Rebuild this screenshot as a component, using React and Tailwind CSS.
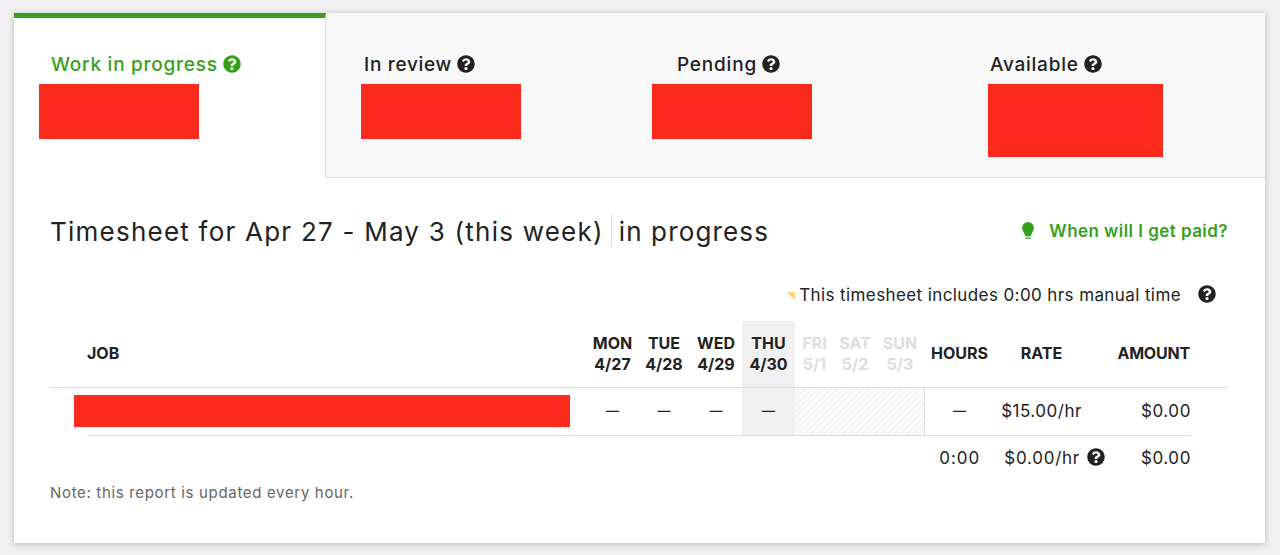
import React from 'react';
import clsx from 'clsx';
import { FaQuestionCircle } from 'react-icons/fa';

const TABS = [
  { label: 'Work in progress', active: true, track: 'tracking-[0.74px]', block: '-ml-3 w-40 h-[55px]' },
  { label: 'In review', track: 'tracking-[0.7px]', block: '-ml-[3px] w-40 h-[55px]' },
  { label: 'Pending', track: 'tracking-[0.8px]', block: '-ml-[25px] w-40 h-[55px]' },
  { label: 'Available', track: 'tracking-[0.75px]', block: '-ml-[2px] w-[175px] h-[73px]' },
];

const DAYS = [
  { name: 'MON', date: '4/27' },
  { name: 'TUE', date: '4/28' },
  { name: 'WED', date: '4/29' },
  { name: 'THU', date: '4/30', today: true },
  { name: 'FRI', date: '5/1', future: true },
  { name: 'SAT', date: '5/2', future: true },
  { name: 'SUN', date: '5/3', future: true },
];

// job | mon..sun | hours | rate | amount
const COLS = 'grid grid-cols-[500px_51px_52px_52px_53px_39px_42px_48px_1px_69px_95px_101px]';

const Help = ({ className }) => (
  <FaQuestionCircle className={clsx('size-[18px] shrink-0', className)} />
);

const Bulb = () => (
  <svg className="w-3 h-[17px] -mt-[3px]" viewBox="0 0 12 17" fill="currentColor">
    <path d="M6 0a5.900 5.900 0 0 0-5.900 5.900c0 2.900 2.400 4.700 2.700 7.200.1 .8.3 1.200.9 1.200h4.600c.6 0 .8-.4.9-1.200.3-2.500 2.700-4.300 2.700-7.200A5.900 5.900 0 0 0 6 0z" />
    <rect x="3.100" y="15.500" width="5.800" height="1.300" rx=".3" />
  </svg>
);

const Tab = ({ tab }) => (
  <div
    className={clsx(
      'h-[165px] border-t-[5px]',
      tab.active
        ? 'w-[312px] pl-[37px] bg-white border-t-[#37a01b] border-r border-r-[#dcdcdc] text-[#37a01b]'
        : 'w-[313px] pl-[38px] bg-[#f8f8f8] border-t-[#f8f8f8] border-b border-b-[#dcdcdc]'
    )}
  >
    <div className="flex items-center h-7 mt-[33px] text-[19px] font-medium">
      <span className={tab.track}>{tab.label}</span>
      <Help className="ml-[5px] -mt-0.5" />
    </div>
    <div className={clsx('mt-[5px] bg-[#fd2b1e]', tab.block)} />
  </div>
);

const App = () => {
  return (
    <div className="h-[555px] overflow-hidden bg-[#f1f1f1] pt-[13px] pl-3.5 text-[#222] font-['Inter','Liberation_Sans',sans-serif]">
      <div className="w-[1251px] h-[530px] bg-white shadow-[0_1px_6px_rgba(57,73,76,0.35)]">
        <div className="flex bg-[#f8f8f8]">
          {TABS.map(tab => <Tab key={tab.label} tab={tab} />)}
        </div>

        <div className="pl-9">
          {/* Title row */}
          <div className="flex items-center justify-between w-[1178px] h-9 mt-[35px]">
            <h1 className="flex items-center text-[26px] whitespace-nowrap">
              <span className="tracking-[1.23px]">Timesheet for Apr 27 - May 3 (this week)</span>
              <span className="ml-[7px] pl-[7px] h-8 leading-[33px] border-l border-[#dcdcdc] tracking-[1.15px]">in progress</span>
            </h1>
            <a className="flex items-center mt-0.5 text-[#37a01b] text-[17px] font-semibold whitespace-nowrap">
              <Bulb />
              <span className="ml-[15px] tracking-[0.45px]">When will I get paid?</span>
            </a>
          </div>

          {/* Manual time note */}
          <div className="flex items-center justify-end w-[1166px] h-6 mt-[35px] text-[17px]">
            <span className="size-[9px] mr-1 bg-[#fbd671] [clip-path:polygon(0_0,100%_0,100%_100%)]" />
            <span className="tracking-[0.4px]">This timesheet includes 0:00 hrs manual time</span>
            <Help className="ml-[17px] -mt-1" />
          </div>

          {/* Header */}
          <div className="w-[1178px] mt-[13px] pl-[37px] border-b border-[#dcdcdc]">
            <div className={clsx(COLS, 'h-[66px] items-center text-[16px] leading-[21px] font-bold')}>
              <div className="-mt-0.5">JOB</div>
              {DAYS.map(d => (
                <div
                  key={d.name}
                  className={clsx(
                    'h-full flex flex-col items-center justify-center',
                    d.today && 'bg-[#f1f1f1]',
                    d.future && 'text-[#dedede]'
                  )}
                >
                  <span>{d.name}</span>
                  <span>{d.date}</span>
                </div>
              ))}
              <div />
              <div className="-mt-0.5 text-center">HOURS</div>
              <div className="-mt-0.5 text-center">RATE</div>
              <div className="-mt-0.5 text-right tracking-[-0.2px]">AMOUNT</div>
            </div>
          </div>

          {/* Job row */}
          <div className={clsx(COLS, 'w-[1104px] h-12 ml-[37px] items-center border-b border-[#dcdcdc] text-[17px]')}>
            <div className="w-[496px] h-8 -ml-[13px] -mt-0.5 bg-[#fd2b1e]" />
            {DAYS.slice(0, 4).map(d => (
              <div key={d.name} className={clsx('h-full flex items-center justify-center', d.today && 'bg-[#f1f1f1]')}>
                <span className="-mt-0.5 text-[13px] font-semibold">—</span>
              </div>
            ))}
            <div className="col-span-3 h-full bg-[repeating-linear-gradient(135deg,#fbfbfb_0px,#fbfbfb_2.5px,#f5f5f5_2.5px,#f5f5f5_4.5px)]" />
            <div className="h-full bg-[#dcdcdc]" />
            <div className="-mt-0.5 text-center text-[13px] font-semibold">—</div>
            <div className="text-center tracking-[0.5px]">$15.00/hr</div>
            <div className="-mr-px text-right tracking-[0.6px]">$0.00</div>
          </div>

          {/* Totals */}
          <div className="flex items-center justify-end w-[1141px] h-[46px] text-[17px]">
            <span className="tracking-[1px]">0:00</span>
            <span className="ml-6 tracking-[0.75px]">$0.00/hr</span>
            <Help className="ml-[7px] -mt-1" />
            <span className="w-[86px] text-right tracking-[0.6px]">$0.00</span>
          </div>

          <p className="-mt-[1px] text-[15px] leading-6 text-[#656565] tracking-[0.67px]">Note: this report is updated every hour.</p>
        </div>
      </div>
    </div>
  );
};

export default App;
